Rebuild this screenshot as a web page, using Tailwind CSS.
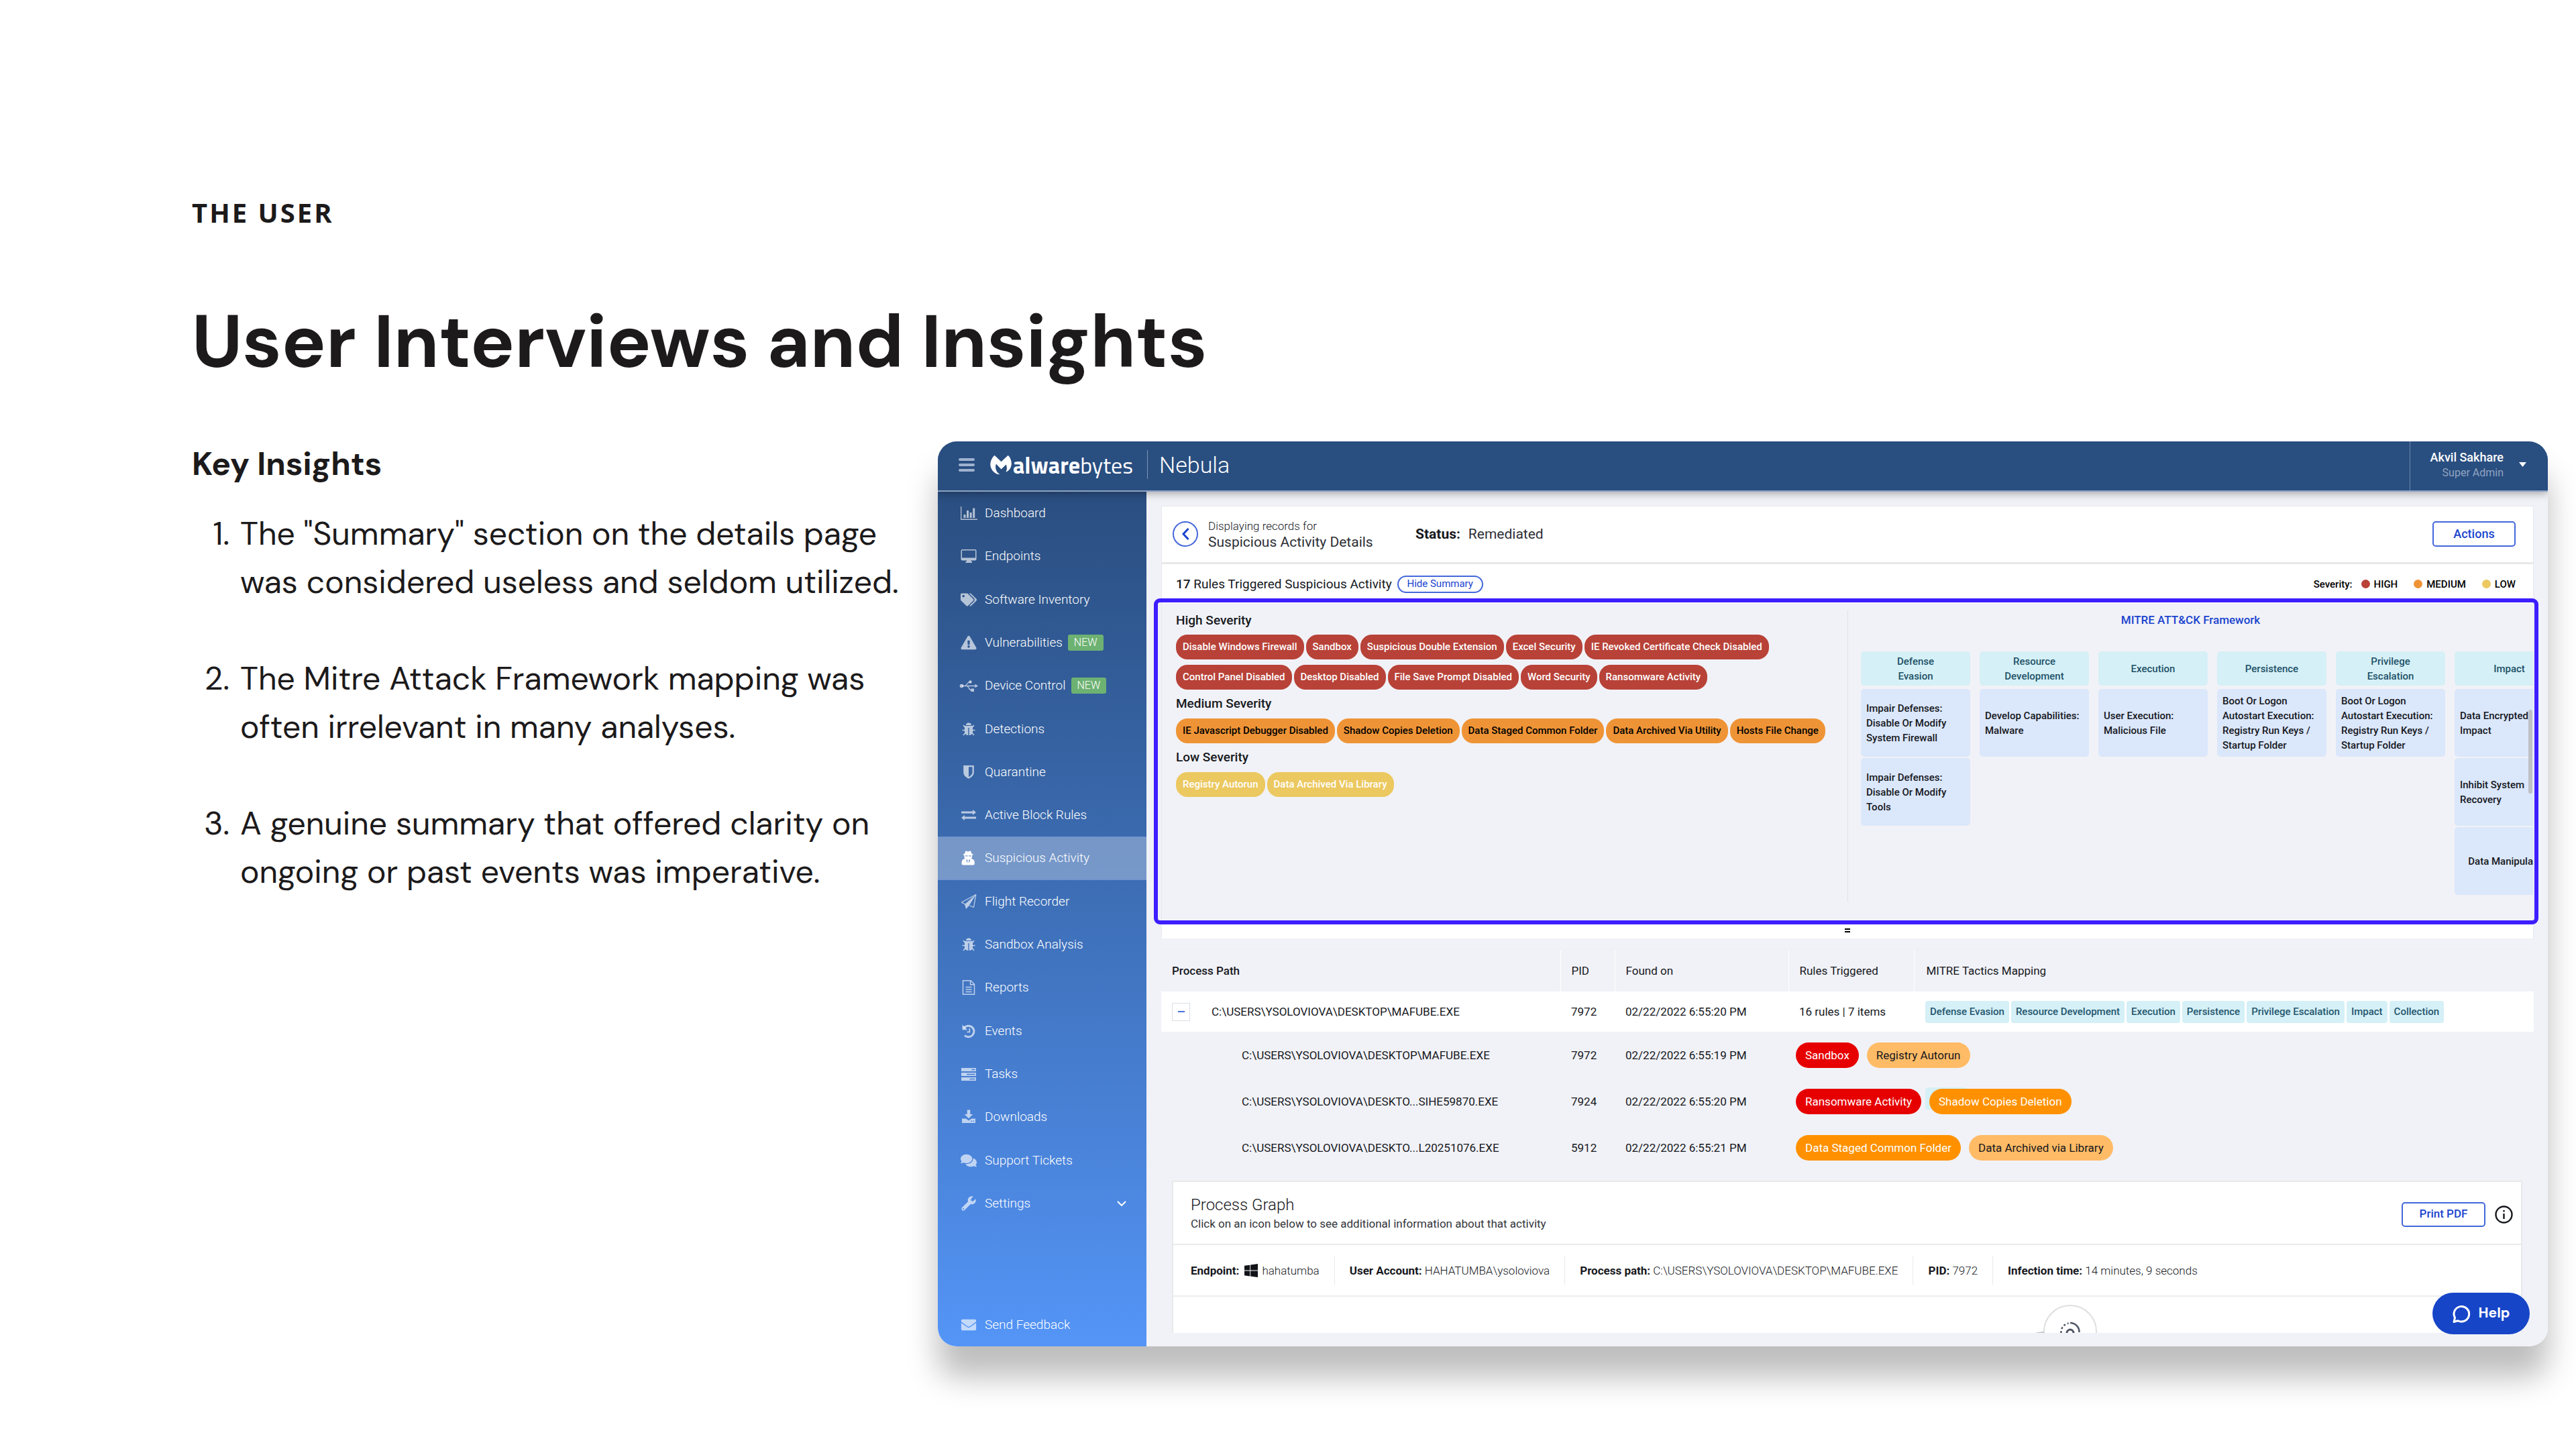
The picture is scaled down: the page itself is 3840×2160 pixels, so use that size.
<!DOCTYPE html>
<html lang="en">
<head>
<meta charset="utf-8">
<meta name="viewport" content="width=device-width, initial-scale=1">
<title>User Interviews and Insights</title>
<script src="https://cdn.jsdelivr.net/npm/@tailwindcss/browser@4"></script>
</head>
<body class="bg-white text-[#1c1a1b] font-['DM_Sans','Inter',sans-serif]">
<main class="min-h-screen overflow-hidden pt-[293px] pb-[152px] pl-[286px] pr-[42px]">
  <p class="font-['Open_Sans',sans-serif] text-[40px] leading-[48px] font-bold tracking-[3px]">THE USER</p>
  <h1 class="mt-[103px] text-[110px] leading-[132px] font-bold">User Interviews and Insights</h1>

  <div class="mt-[82px] flex items-start">
    <!-- Insights -->
    <section class="w-[1112px] shrink-0 text-[48px]">
      <h2 class="leading-[68px] font-bold">Key Insights</h2>
      <ol class="mt-[34px] flex flex-col gap-[72px] leading-[72px]">
        <li class="flex gap-4"><span class="w-14 text-right">1.</span><p>The "Summary" section on the details page<br>was considered useless and seldom utilized.</p></li>
        <li class="flex gap-4"><span class="w-14 text-right">2.</span><p>The Mitre Attack Framework mapping was<br>often irrelevant in many analyses.</p></li>
        <li class="flex gap-4"><span class="w-14 text-right">3.</span><p>A genuine summary that offered clarity on<br>ongoing or past events was imperative.</p></li>
      </ol>
    </section>

    <!-- Product window -->
    <section class="min-w-0 flex-1 rounded-[28px] shadow-[0_46px_46px_rgba(0,0,0,0.26)] font-['Roboto',sans-serif] text-[#16181d]">
      <div class="relative overflow-hidden rounded-[28px] bg-[#f1f2f7]">

        <header class="relative z-10 flex h-[75px] items-stretch border-b-2 border-[#8da3c4] bg-[#294e80] text-white shadow-[0_2px_12px_rgba(0,0,0,0.35)]">
          <div class="flex flex-1 items-center pl-[31px] pb-1">
            <button class="flex h-5 w-6 flex-col justify-between" aria-label="Menu">
              <span class="h-1 w-full rounded-xs bg-[#9fb1cf]"></span><span class="h-1 w-full rounded-xs bg-[#9fb1cf]"></span><span class="h-1 w-full rounded-xs bg-[#9fb1cf]"></span>
            </button>
            <a href="#" class="ml-[23px] flex items-center gap-[2px]">
              <svg class="h-[30px] w-8" viewBox="-1 0 97 89" fill="#fff"><path d="M19 1 49 30 80 1C92 12 97 30 95 44 93 60 85 72 69 77 76 68 76 55 71 43L49 64 26 40C19 58 27 80 44 88 20 87 2 68 0 45-1 28 8 10 19 1Z"/></svg>
              <span class="font-['Titillium_Web','Open_Sans',sans-serif] text-[34px] leading-[40px]"><b class="font-bold">alware</b>bytes</span>
            </a>
            <span class="ml-[21px] h-[43px] w-px bg-[#8093b1]"></span>
            <span class="ml-[17px] text-[34px] leading-[40px] font-light">Nebula</span>
          </div>
          <button class="flex items-center gap-[23px] border-l border-[#7089ab] pl-[30px] pr-8 pb-1 text-right">
            <span class="flex flex-col"><span class="text-[18px] leading-6 font-medium">Akvil Sakhare</span><span class="text-[16px] leading-[22px] text-[#92a4c0]">Super Admin</span></span>
            <svg class="h-[7px] w-[11px]" viewBox="0 0 11 7" fill="#fff"><path d="M0 0h11L5.500 7z"/></svg>
          </button>
        </header>

        <div class="flex">
          <!-- Sidebar -->
          <nav class="flex w-[311px] shrink-0 flex-col bg-linear-to-b from-[#2a4e80] to-[#5495f7] text-[19px] leading-6 font-light text-white">
            <ul class="grid h-[1093px] auto-rows-fr">
              <li><a href="#" class="flex h-full items-center gap-3 pl-[34px]"><svg class="size-6 overflow-visible fill-white/65" viewBox="0 0 24 24"><path d="M0 2h1.300v18.500H25v1.500H0zM4.500 14h3v5h-3zM9 8h3v11H9zM13.600 11h3v8h-3zM18.200 4.500h3V19h-3z"/></svg>Dashboard</a></li>
              <li><a href="#" class="flex h-full items-center gap-3 pl-[34px]"><svg class="size-6 overflow-visible fill-white/65" viewBox="0 0 24 24"><path fill-rule="evenodd" d="M2.500 2h19A2 2 0 0 1 23.500 4v12.500a2 2 0 0 1-2 2h-6V20h1.500v2H7.500v-2H9v-1.500H2.500a2 2 0 0 1-2-2V4a2 2 0 0 1 2-2zM2 3.500v11h20v-11z"/></svg>Endpoints</a></li>
              <li><a href="#" class="flex h-full items-center gap-3 pl-[34px]"><svg class="size-6 fill-white/65" viewBox="0 0 640 512"><path d="M497.941 225.941L286.059 14.059A48 48 0 0 0 252.118 0H48C21.490 0 0 21.490 0 48v204.118a48 48 0 0 0 14.059 33.941l211.882 211.882c18.744 18.745 49.136 18.746 67.882 0l204.118-204.118c18.745-18.745 18.745-49.137 0-67.882zM112 160c-26.510 0-48-21.490-48-48s21.490-48 48-48 48 21.490 48 48-21.490 48-48 48zm513.941 133.823L421.823 497.941c-18.745 18.745-49.137 18.745-67.882 0l-.36-.36L527.640 323.522c16.999-16.999 26.360-39.600 26.360-63.640s-9.362-46.641-26.360-63.640L331.397 0h48.721a48 48 0 0 1 33.941 14.059l211.882 211.882c18.745 18.745 18.745 49.137 0 67.882z"/></svg>Software Inventory</a></li>
              <li><a href="#" class="flex h-full items-center gap-3 pl-[34px]"><svg class="size-6 fill-white/65" viewBox="-10 0 596 512"><path d="M569.517 440.013C587.975 472.007 564.806 512 527.940 512H48.054c-36.937 0-59.999-40.055-41.577-71.987L246.423 23.985c18.467-32.009 64.720-31.951 83.154 0l239.940 416.028zM288 354c-25.405 0-46 20.595-46 46s20.595 46 46 46 46-20.595 46-46-20.595-46-46-46zm-43.673-165.346l7.418 136c.347 6.364 5.609 11.346 11.982 11.346h48.546c6.373 0 11.635-4.982 11.982-11.346l7.418-136c.375-6.874-5.098-12.654-11.982-12.654h-63.383c-6.884 0-12.356 5.780-11.981 12.654z"/></svg><span class="flex items-center gap-2">Vulnerabilities<span class="rounded-[3px] bg-[#6db272] px-[9px] text-[16px]">NEW</span></span></a></li>
              <li><a href="#" class="flex h-full items-center gap-3 pl-[34px]"><svg class="size-6 overflow-visible fill-white/65 stroke-white/65" viewBox="0 0 24 24"><g stroke="none"><circle cx="1.500" cy="12.500" r="2.800"/><circle cx="14.500" cy="6.500" r="2.200"/><rect x="15.500" y="16.500" width="4.500" height="4.500"/><path d="M21.500 9.700v5.600l4.500-2.800z"/></g><path fill="none" stroke-width="1.300" d="M2 12.500h20M6 12.500c4-.5 3-6 8.500-6M9.500 12.500c3 .5 2 6.300 6.500 6.300"/></svg><span class="flex items-center gap-2">Device Control<span class="rounded-[3px] bg-[#6db272] px-[9px] text-[16px]">NEW</span></span></a></li>
              <li><a href="#" class="flex h-full items-center gap-3 pl-[34px]"><svg class="size-6 fill-white/65 stroke-white/65" viewBox="0 0 24 24"><g stroke="none"><path d="M8 6a4 3.600 0 0 1 8 0zM6 7h12v9a5 5 0 0 1-4.800 5h-.5V10h-1.400v11h-.5A5 5 0 0 1 6 16z"/></g><path fill="none" stroke-width="1.600" d="M6.500 9 4 6M17.500 9 20 6M7 13.500H2.500M17 13.500h4.500M7 17.500 4 21M17 17.500l3 3.500"/></svg>Detections</a></li>
              <li><a href="#" class="flex h-full items-center gap-3 pl-[34px]"><svg class="size-6 fill-white/65" viewBox="0 0 24 24"><path fill-rule="evenodd" d="M4.200 2h15.600v10c0 5-3.500 7.500-7.800 9.800C7.700 19.500 4.200 17 4.200 12zM12 4.300v14.900c3-1.800 5.500-3.800 5.500-7.200V4.300z"/></svg>Quarantine</a></li>
              <li><a href="#" class="flex h-full items-center gap-3 pl-[34px]"><svg class="size-6 fill-white/65" viewBox="0 0 24 24"><path d="M1 6.500h17V4l5 4-5 4V9.500H1zM23 14.500H6V12l-5 4 5 4v-2.500h17z"/></svg>Active Block Rules</a></li>
              <li><a href="#" aria-current="page" class="flex h-full items-center gap-3 border-y border-[#6b93d0] bg-white/30 pl-[34px]"><svg class="size-6 fill-white" viewBox="0 0 24 24"><path d="M8.200 1.500c1 0 1.800.8 3 .8s2-.8 3-.8c1.200 0 1.700 2 2.200 4l2.100.8v1.100l-1.500.5v2.600c0 1-.6 2-1 2.600l3 1.200c1.800 1.500 2 5 1.800 6.500-.2 1.200-.9 1.700-2 1.700H3.600c-1.100 0-1.800-.5-2-1.700-.2-1.500 0-5 1.800-6.500l3-1.200c-.4-.6-1-1.600-1-2.600V7.900L4 7.400V6.300l2-.8c.5-2 1-4 2.200-4z"/><path fill="#7698cb" d="M7 8.300h3.500v1.200H7zM12.200 8.300h3.500v1.200h-3.500zM8 14l2.500 1-.5 5zM14.500 14l-2.500 1 .5 5z"/></svg>Suspicious Activity</a></li>
              <li><a href="#" class="flex h-full items-center gap-3 pl-[34px]"><svg class="size-6 fill-white/65 stroke-white/65" viewBox="0 0 24 24"><path fill="none" stroke-width="1.300" stroke-linejoin="round" d="M6.500 16 1.500 13 22.800 1.500 19.500 20.500l-6-2.500"/><path stroke="none" d="M22.800 1.500 6 16l2 7 4.500-4.800z"/></svg>Flight Recorder</a></li>
              <li><a href="#" class="flex h-full items-center gap-3 pl-[34px]"><svg class="size-6 fill-white/65 stroke-white/65" viewBox="0 0 24 24"><g stroke="none"><path d="M8 6a4 3.600 0 0 1 8 0zM6 7h12v9a5 5 0 0 1-4.800 5h-.5V10h-1.400v11h-.5A5 5 0 0 1 6 16z"/></g><path fill="none" stroke-width="1.600" d="M6.500 9 4 6M17.500 9 20 6M7 13.500H2.500M17 13.500h4.500M7 17.500 4 21M17 17.500l3 3.500"/></svg>Sandbox Analysis</a></li>
              <li><a href="#" class="flex h-full items-center gap-3 pl-[34px]"><svg class="size-6 fill-none stroke-white/65" viewBox="0 0 24 24" stroke-width="1.500"><path d="M3.500 1.800h11.500l5.500 5.500v15H3.500zM14.500 1.800v6h6M7.500 11.500h9M7.500 15h9M7.500 18.500h9"/></svg>Reports</a></li>
              <li><a href="#" class="flex h-full items-center gap-3 pl-[34px]"><svg class="size-6 fill-none stroke-white/65" viewBox="0 0 24 24"><path stroke-width="3" d="M5 7.500A8.300 8.300 0 1 1 6 18.500"/><path stroke-width="1.700" d="M13.300 8v5.300H9.500"/><path stroke="none" class="fill-white/65" d="M2.500 2.500v7.700h7.700z"/></svg>Events</a></li>
              <li><a href="#" class="flex h-full items-center gap-3 pl-[34px]"><svg class="size-6 fill-white/65" viewBox="0 0 24 24"><path fill-rule="evenodd" d="M1 3h22v5H1zM16.500 4.800v1.400h5V4.800zM1 10h22v5H1zM9 11.800v1.400h12.500v-1.400zM1 17h22v5H1zM13.500 18.800v1.400h8v-1.400z"/></svg>Tasks</a></li>
              <li><a href="#" class="flex h-full items-center gap-3 pl-[34px]"><svg class="size-6 fill-white/65" viewBox="0 0 24 24"><path fill-rule="evenodd" d="M9.700 1.500h4.600V8h4L12 14.300 5.700 8h4zM2 14.500h6l4 3 4-3h6v6.500H2zM15.500 17.500v1.600h1.600v-1.600zM18.500 17.500v1.600h1.600v-1.600z"/></svg>Downloads</a></li>
              <li><a href="#" class="flex h-full items-center gap-3 pl-[34px]"><svg class="size-6 fill-white/65" viewBox="0 0 576 512"><path d="M416 192c0-88.400-93.100-160-208-160S0 103.600 0 192c0 34.300 14.100 65.900 38 92-13.400 30.200-35.500 54.200-35.800 54.500-2.200 2.300-2.800 5.700-1.500 8.700S4.800 352 8 352c36.600 0 66.900-12.300 88.700-25 32.200 15.700 70.300 25 111.300 25 114.900 0 208-71.600 208-160zm122 220c23.900-26 38-57.700 38-92 0-66.900-53.500-124.200-129.300-148.100.9 6.600 1.300 13.300 1.300 20.100 0 105.900-107.700 192-240 192-10.800 0-21.300-.8-31.700-1.900C207.800 439.600 281.800 480 368 480c41 0 79.100-9.200 111.300-25 21.800 12.700 52.100 25 88.700 25 3.200 0 6.100-1.900 7.300-4.800 1.300-2.900.7-6.300-1.500-8.700-.3-.3-22.400-24.200-35.800-54.500z"/></svg>Support Tickets</a></li>
              <li><a href="#" class="flex h-full items-center gap-3 pl-[34px] pr-[30px]"><svg class="size-6 fill-white/65" viewBox="-32 -32 576 576"><path d="M507.730 109.100c-2.240-9.030-13.540-12.090-20.120-5.510l-74.360 74.360-67.880-11.310-11.310-67.880 74.360-74.360c6.620-6.620 3.430-17.900-5.660-20.160-47.380-11.740-99.550.91-136.580 37.930-39.640 39.640-50.550 97.100-34.050 147.200L18.740 402.760c-24.990 24.990-24.990 65.510 0 90.500 24.990 24.990 65.510 24.990 90.500 0l213.210-213.210c50.120 16.710 107.470 5.680 147.370-34.220 37.070-37.070 49.700-89.320 37.910-136.730zM64 472c-13.250 0-24-10.750-24-24 0-13.260 10.750-24 24-24s24 10.740 24 24c0 13.250-10.750 24-24 24z"/></svg><span class="flex-1">Settings</span><svg class="h-2 w-[14px] fill-none stroke-white" viewBox="0 0 14 8" stroke-width="2"><path d="M1 1l6 6 6-6"/></svg></a></li>
            </ul>
            <a href="#" class="mt-auto flex h-16 items-center gap-3 pl-[34px]"><svg class="size-6 fill-white/65" viewBox="-20 0 552 512"><path d="M502.300 190.800c3.900-3.100 9.700-.2 9.700 4.700V400c0 26.500-21.500 48-48 48H48c-26.500 0-48-21.500-48-48V195.600c0-5 5.700-7.800 9.700-4.700 22.400 17.400 52.100 39.500 154.100 113.600 21.100 15.400 56.700 47.800 92.200 47.600 35.700.3 72-32.800 92.300-47.600 102-74.100 131.600-96.300 154-113.700zM256 320c23.200.4 56.600-29.200 73.400-41.400 132.700-96.300 142.800-104.700 173.400-128.700 5.800-4.500 9.200-11.500 9.200-18.900v-19c0-26.500-21.500-48-48-48H48c-26.500 0-48 21.500-48 48v19c0 7.400 3.400 14.300 9.200 18.900 30.600 23.900 40.700 32.400 173.400 128.700 16.800 12.200 50.200 41.800 73.400 41.400z"/></svg>Send Feedback</a>
          </nav>

          <!-- Content -->
          <div class="min-w-0 flex-1 pt-[21px] pr-[21px] pb-5 pl-[22px]">
            <div class="border border-b-0 border-[#e8e9ec] bg-white">
              <div class="flex h-[86px] items-center border-b-[3px] border-[#e8e8e9] pr-[26px] pb-[2px] pl-4">
                <button aria-label="Back" class="flex size-[38px] items-center justify-center rounded-full border-2 border-[#4468da]"><svg class="h-[18px] w-[11px] fill-none stroke-[#1a44cf]" viewBox="0 0 11 18" stroke-width="3"><path d="M9.500 1 2 9l7.500 8"/></svg></button>
                <div class="ml-[15px] w-[309px] leading-6 font-light"><p class="text-[17px]">Displaying records for</p><h3 class="text-[21px] font-normal text-[#2d2f36]">Suspicious Activity Details</h3></div>
                <p class="text-[21px] leading-6 font-normal"><b class="font-bold">Status:</b><span class="ml-3 text-[#2d2f36]">Remediated</span></p>
                <button class="ml-auto h-[38px] w-[124px] rounded-[5px] border-2 border-[#4468da] text-[18px] font-medium text-[#1a44cf]">Actions</button>
              </div>
              <div class="flex h-[59px] items-center pr-[26px] pl-[21px]">
                <h4 class="text-[19px] leading-6"><b class="font-medium">17</b> Rules Triggered Suspicious Activity</h4>
                <button class="ml-2 flex h-[26px] w-32 items-center justify-center rounded-full border-2 border-[#4468da] text-[15px] text-[#1a44cf]">Hide Summary</button>
                <div class="ml-auto flex items-center text-[15px] leading-5 font-medium text-black">
                  <span>Severity:</span>
                  <span class="ml-[13px] size-[13px] rounded-full bg-[#b84238]"></span><span class="ml-[6px]">HIGH</span>
                  <span class="ml-6 size-[13px] rounded-full bg-[#ef9436]"></span><span class="ml-[6px]">MEDIUM</span>
                  <span class="ml-6 size-[13px] rounded-full bg-[#ecc860]"></span><span class="ml-[6px]">LOW</span>
                </div>
              </div>

              <div class="relative">
                <div class="flex h-[474px] bg-[#f1f2f7] py-[10px]">
                  <div class="w-1/2 pr-3 pl-[21px]">
                    <h4 class="mt-[3px] text-[19px] leading-6 font-medium">High Severity</h4>
                    <div class="mt-[9px] flex flex-wrap gap-x-[3px] gap-y-2 text-[15px] leading-[37px] font-medium text-white">
                      <span class="rounded-[17px] bg-[#b84238] px-[10px]">Disable Windows Firewall</span>
                      <span class="rounded-[17px] bg-[#b84238] px-[10px]">Sandbox</span>
                      <span class="rounded-[17px] bg-[#b84238] px-[10px]">Suspicious Double Extension</span>
                      <span class="rounded-[17px] bg-[#b84238] px-[10px]">Excel Security</span>
                      <span class="rounded-[17px] bg-[#b84238] px-[10px]">IE Revoked Certificate Check Disabled</span>
                      <span class="rounded-[17px] bg-[#b84238] px-[10px]">Control Panel Disabled</span>
                      <span class="rounded-[17px] bg-[#b84238] px-[10px]">Desktop Disabled</span>
                      <span class="rounded-[17px] bg-[#b84238] px-[10px]">File Save Prompt Disabled</span>
                      <span class="rounded-[17px] bg-[#b84238] px-[10px]">Word Security</span>
                      <span class="rounded-[17px] bg-[#b84238] px-[10px]">Ransomware Activity</span>
                    </div>
                    <h4 class="mt-[9px] text-[19px] leading-6 font-medium">Medium Severity</h4>
                    <div class="mt-[10px] flex flex-wrap gap-x-[3px] gap-y-2 text-[15px] leading-[37px] font-medium text-black">
                      <span class="rounded-[17px] bg-[#ef9436] px-[10px]">IE Javascript Debugger Disabled</span>
                      <span class="rounded-[17px] bg-[#ef9436] px-[10px]">Shadow Copies Deletion</span>
                      <span class="rounded-[17px] bg-[#ef9436] px-[10px]">Data Staged Common Folder</span>
                      <span class="rounded-[17px] bg-[#ef9436] px-[10px]">Data Archived Via Utility</span>
                      <span class="rounded-[17px] bg-[#ef9436] px-[10px]">Hosts File Change</span>
                    </div>
                    <h4 class="mt-[9px] text-[19px] leading-6 font-medium">Low Severity</h4>
                    <div class="mt-[10px] flex flex-wrap gap-x-[3px] gap-y-2 text-[15px] leading-[37px] font-medium text-white">
                      <span class="rounded-[17px] bg-[#ecc860] px-[10px]">Registry Autorun</span>
                      <span class="rounded-[17px] bg-[#ecc860] px-[10px]">Data Archived Via Library</span>
                    </div>
                  </div>
                  <div class="mb-[20px] w-1/2 overflow-hidden border-l border-[#dfe1e6]">
                    <h4 class="mt-[2px] text-center text-[17px] leading-6 font-medium text-[#1a44cf]">MITRE ATT&amp;CK Framework</h4>
                    <div class="mt-[35px] flex gap-[14px] pl-[19px] text-[15px] leading-[22px] font-medium">
                      <div class="flex w-[163px] shrink-0 flex-col gap-[2px]">
                        <h5 class="mb-[3px] flex h-[51px] items-center justify-center rounded-[5px] bg-[#d5f0f6] text-center text-[#1e5168]">Defense<br>Evasion</h5>
                        <p class="flex h-[101px] items-center rounded-[5px] bg-[#dbe7fb] px-2">Impair Defenses:<br>Disable Or Modify<br>System Firewall</p>
                        <p class="flex h-[101px] items-center rounded-[5px] bg-[#dbe7fb] px-2">Impair Defenses:<br>Disable Or Modify<br>Tools</p>
                      </div>
                      <div class="flex w-[163px] shrink-0 flex-col gap-[2px]">
                        <h5 class="mb-[3px] flex h-[51px] items-center justify-center rounded-[5px] bg-[#d5f0f6] text-center text-[#1e5168]">Resource<br>Development</h5>
                        <p class="flex h-[101px] items-center rounded-[5px] bg-[#dbe7fb] px-2">Develop Capabilities:<br>Malware</p>
                      </div>
                      <div class="flex w-[163px] shrink-0 flex-col gap-[2px]">
                        <h5 class="mb-[3px] flex h-[51px] items-center justify-center rounded-[5px] bg-[#d5f0f6] text-center text-[#1e5168]">Execution</h5>
                        <p class="flex h-[101px] items-center rounded-[5px] bg-[#dbe7fb] px-2">User Execution:<br>Malicious File</p>
                      </div>
                      <div class="flex w-[163px] shrink-0 flex-col gap-[2px]">
                        <h5 class="mb-[3px] flex h-[51px] items-center justify-center rounded-[5px] bg-[#d5f0f6] text-center text-[#1e5168]">Persistence</h5>
                        <p class="flex h-[101px] items-center rounded-[5px] bg-[#dbe7fb] px-2">Boot Or Logon<br>Autostart Execution:<br>Registry Run Keys /<br>Startup Folder</p>
                      </div>
                      <div class="flex w-[163px] shrink-0 flex-col gap-[2px]">
                        <h5 class="mb-[3px] flex h-[51px] items-center justify-center rounded-[5px] bg-[#d5f0f6] text-center text-[#1e5168]">Privilege<br>Escalation</h5>
                        <p class="flex h-[101px] items-center rounded-[5px] bg-[#dbe7fb] px-2">Boot Or Logon<br>Autostart Execution:<br>Registry Run Keys /<br>Startup Folder</p>
                      </div>
                      <div class="flex w-[163px] shrink-0 flex-col gap-[2px]">
                        <h5 class="mb-[3px] flex h-[51px] items-center justify-center rounded-[5px] bg-[#d5f0f6] text-center text-[#1e5168]">Impact</h5>
                        <p class="flex h-[101px] items-center rounded-[5px] bg-[#dbe7fb] px-2">Data Encrypted<br>Impact</p>
                        <p class="flex h-[101px] items-center rounded-[5px] bg-[#dbe7fb] px-2">Inhibit System<br>Recovery</p>
                        <p class="flex h-[101px] items-center justify-center rounded-[5px] bg-[#dbe7fb] whitespace-nowrap">Data Manipulation</p>
                      </div>
                    </div>
                  </div>
                </div>
                <span class="absolute top-[158px] right-px h-[125px] w-[6px] rounded-full bg-[#bfc1c6]"></span>
                <!-- Highlight round the summary -->
                <div class="pointer-events-none absolute -top-2 -right-2 -bottom-1 -left-3 rounded-[9px] border-[6px] border-[#3d1eff]"></div>
              </div>
              <div class="flex h-[25px] items-center justify-center"><span class="h-[6px] w-2 border-y-2 border-black"></span></div>
            </div>

            <!-- Process table -->
            <div class="mt-4 border-t border-[#eeeff2]">
              <table class="w-full table-fixed border-collapse text-left text-[17px] leading-6">
                <colgroup><col class="w-[595px]"><col class="w-[81px]"><col class="w-[259px]"><col class="w-[187px]"><col></colgroup>
                <thead>
                  <tr class="h-[62px] border-b border-white">
                    <th class="border-r border-white pl-4 font-medium">Process Path</th>
                    <th class="border-r border-white pl-4 font-normal">PID</th>
                    <th class="border-r border-white pl-4 font-normal">Found on</th>
                    <th class="border-r border-white pl-4 font-normal">Rules Triggered</th>
                    <th class="pl-[18px] font-normal">MITRE Tactics Mapping</th>
                  </tr>
                </thead>
                <tbody>
                  <tr class="h-[60px] bg-white">
                    <td class="pl-4"><div class="flex items-center gap-8"><button aria-label="Collapse" class="flex size-[27px] items-center justify-center border border-[#dcdee4]"><span class="h-[2px] w-[10px] bg-[#4a70e0]"></span></button>C:\USERS\YSOLOVIOVA\DESKTOP\MAFUBE.EXE</div></td>
                    <td class="pl-4">7972</td><td class="pl-4">02/22/2022 6:55:20 PM</td><td class="pl-4">16 rules | 7 items</td>
                    <td class="pl-[17px]"><div class="flex gap-[3px] text-[15px] leading-[33px] font-medium text-[#24566e]">
                      <span class="rounded-[4px] bg-[#d5f0f6] px-[7px]">Defense Evasion</span><span class="rounded-[4px] bg-[#d5f0f6] px-[7px]">Resource Development</span><span class="rounded-[4px] bg-[#d5f0f6] px-[7px]">Execution</span><span class="rounded-[4px] bg-[#d5f0f6] px-[7px]">Persistence</span><span class="rounded-[4px] bg-[#d5f0f6] px-[7px]">Privilege Escalation</span><span class="rounded-[4px] bg-[#d5f0f6] px-[7px]">Impact</span><span class="rounded-[4px] bg-[#d5f0f6] px-[7px]">Collection</span>
                    </div></td>
                  </tr>
                  <tr class="h-[69px]">
                    <td class="pl-[120px]">C:\USERS\YSOLOVIOVA\DESKTOP\MAFUBE.EXE</td><td class="pl-4">7972</td><td class="pl-4">02/22/2022 6:55:19 PM</td>
                    <td colspan="2" class="pl-[11px]"><div class="flex gap-3 leading-[38px]"><span class="rounded-[19px] bg-[#e60000] px-[14px] text-white">Sandbox</span><span class="rounded-[19px] bg-[#ffbb66] px-[14px]">Registry Autorun</span></div></td>
                  </tr>
                  <tr class="h-[69px]">
                    <td class="pl-[120px]">C:\USERS\YSOLOVIOVA\DESKTO...SIHE59870.EXE</td><td class="pl-4">7924</td><td class="pl-4">02/22/2022 6:55:20 PM</td>
                    <td colspan="2" class="pl-[11px]"><div class="relative flex gap-3 leading-[38px]"><span class="absolute -top-[2px] left-[193px] h-[33px] w-[62px] rounded-[4px] bg-[#d5f0f6]"></span><span class="relative rounded-[19px] bg-[#e60000] px-[14px] text-white">Ransomware Activity</span><span class="relative rounded-[19px] bg-[#ff9100] px-[14px] text-white">Shadow Copies Deletion</span></div></td>
                  </tr>
                  <tr class="h-[69px]">
                    <td class="pl-[120px]">C:\USERS\YSOLOVIOVA\DESKTO...L20251076.EXE</td><td class="pl-4">5912</td><td class="pl-4">02/22/2022 6:55:21 PM</td>
                    <td colspan="2" class="pl-[11px]"><div class="flex gap-3 leading-[38px]"><span class="rounded-[19px] bg-[#ff9100] px-[14px] text-white">Data Staged Common Folder</span><span class="rounded-[19px] bg-[#ffbb66] px-[14px]">Data Archived via Library</span></div></td>
                  </tr>
                </tbody>
              </table>
            </div>

            <!-- Process graph -->
            <div class="mt-[15px] mr-[17px] ml-4 border-2 border-b-0 border-[#e8e9eb] bg-white">
              <div class="flex h-[94px] items-center border-b-2 border-[#e9eaea] pt-1 pr-3 pl-[26px]">
                <div class="leading-7 font-light"><h3 class="text-[24px]">Process Graph</h3><p class="text-[17px] font-normal text-[#33353b]">Click on an icon below to see additional information about that activity</p></div>
                <button class="ml-auto h-[37px] w-[125px] rounded-[5px] border-2 border-[#4468da] text-[17px] font-medium text-[#1a44cf]">Print PDF</button>
                <svg class="ml-[14px] size-[27px] fill-none stroke-[#16181d]" viewBox="0 0 27 27" stroke-width="2.400"><circle cx="13.500" cy="13.500" r="12"/><path d="M13.500 12v8M13.500 7v2.600"/></svg>
              </div>
              <div class="flex h-[77px] items-center border-b-2 border-[#ededee] pl-[26px] text-[17px] leading-[42px] font-light">
                <p class="flex items-center pr-[22px]"><b class="font-bold">Endpoint:</b><svg class="mr-[6px] ml-2 size-5 fill-[#111318]" viewBox="0 32 448 448"><path d="M0 93.700l183.600-25.300v177.400H0V93.700zm0 324.600l183.600 25.300V268.400H0v149.900zm203.800 28L448 480V268.400H203.800v177.900zm0-380.600v180.100H448V32L203.800 65.700z"/></svg>hahatumba</p>
                <p class="border-l border-[#e9eaee] px-[22px]"><b class="font-bold">User Account:</b> HAHATUMBA\ysoloviova</p>
                <p class="border-l border-[#e9eaee] px-[22px]"><b class="font-bold">Process path:</b> C:\USERS\YSOLOVIOVA\DESKTOP\MAFUBE.EXE</p>
                <p class="border-l border-[#e9eaee] px-[22px]"><b class="font-bold">PID:</b> 7972</p>
                <p class="border-l border-[#e9eaee] px-[22px]"><b class="font-bold">Infection time:</b> 14 minutes, 9 seconds</p>
              </div>
              <div class="flex h-[54px] justify-center overflow-hidden pt-[2px]">
                <svg class="h-[90px] w-[760px] shrink-0 fill-none" viewBox="0 0 760 90">
                  <circle cx="712" cy="50" r="39" stroke="#dedfe1" stroke-width="2"/>
                  <path d="M660 51.500l13-2v4z" fill="#c9cacd"/>
                  <path d="M712 37a13.500 13.500 0 0 1 13.500 14" stroke="#4f5566" stroke-width="2.500"/>
                  <path d="M698.500 52a13.500 13.500 0 0 1 11-14.500" stroke="#4f5566" stroke-width="2.500" stroke-dasharray="3 3"/>
                  <path d="M707 57v-5a5 5 0 0 1 10 0v5" stroke="#4f5566" stroke-width="3"/>
                </svg>
              </div>
            </div>
          </div>
        </div>

        <button class="absolute right-[27px] bottom-[18px] flex h-[62px] w-[145px] items-center justify-center gap-3 rounded-full bg-[#1645c8] font-['DM_Sans','Inter',sans-serif] text-[21px] font-bold text-white">
          <svg class="size-[27px] fill-none stroke-white" viewBox="0 0 27 27" stroke-width="3"><path stroke-linejoin="round" d="M2 25.500l1.500-6.200A11.300 11.300 0 1 1 8 23.700z"/></svg>Help
        </button>
      </div>
    </section>
  </div>
</main>
</body>
</html>
